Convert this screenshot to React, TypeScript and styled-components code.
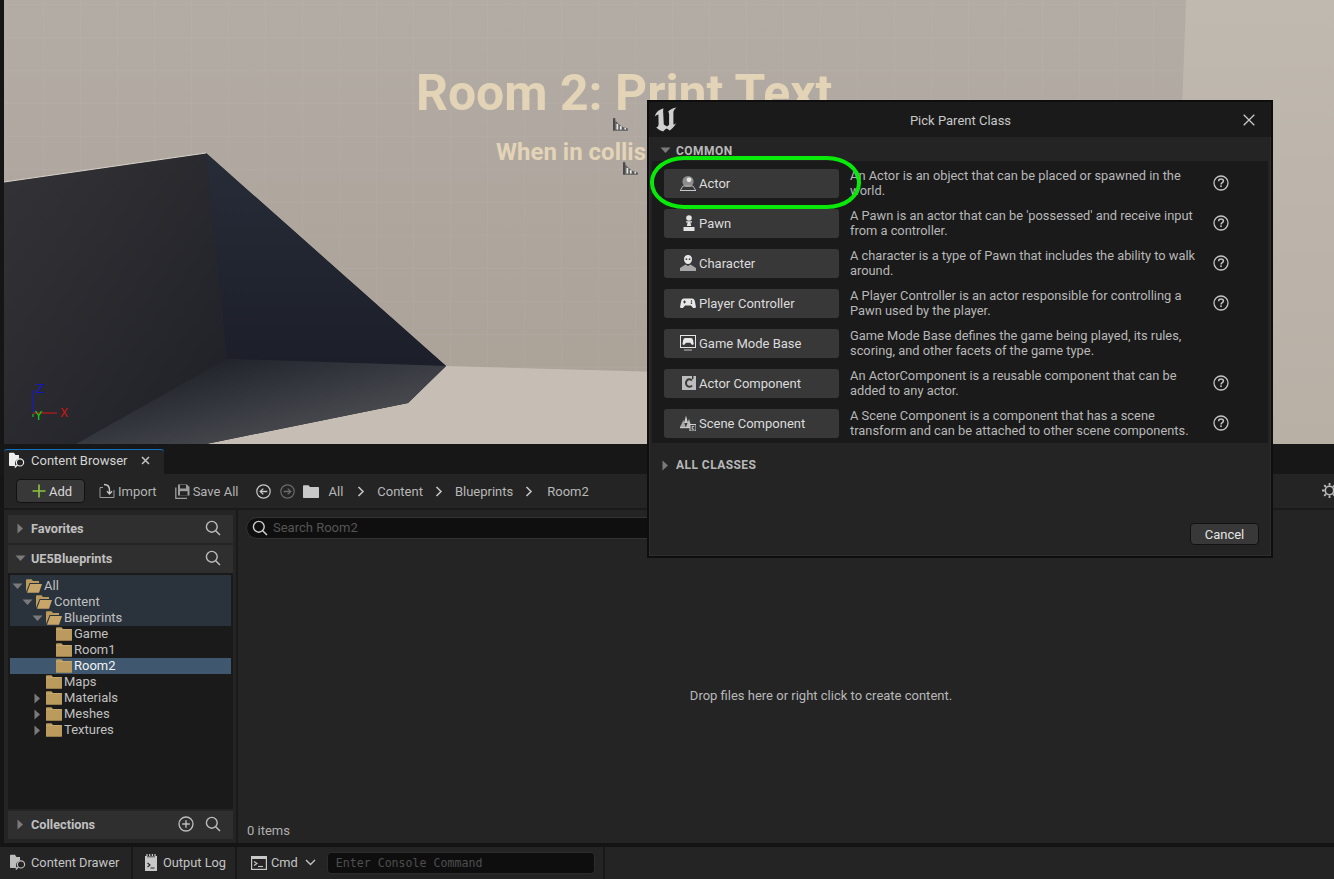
import React from "react";
import styled, { createGlobalStyle } from "styled-components";

const Global = createGlobalStyle`
  html, body { margin: 0; padding: 0; width: 1334px; height: 879px; overflow: hidden; background: #151515; }
  #root { width: 1334px; height: 879px; }
  * { box-sizing: border-box; }
`;

const Page = styled.div`
  position: relative;
  width: 1334px;
  height: 879px;
  display: grid;
  grid-template-rows: 444px 30px 36px 333px 4px 32px;
  font-family: Roboto, "Liberation Sans", sans-serif;
  font-size: 13px;
  color: #c0c0c0;
  background: #151515;
  overflow: hidden;
`;

const Viewport = styled.div`
  position: relative;
  overflow: hidden;
  background: #aaa298;
  svg { display: block; }
`;

const SceneTitle = styled.div`
  position: absolute;
  left: 416px;
  top: 64px;
  font-size: 49.9px;
  line-height: 58px;
  font-weight: 700;
  color: #e3d4b7;
  white-space: nowrap;
`;

const SceneSub = styled.div`
  position: absolute;
  left: 496px;
  top: 137px;
  font-size: 24px;
  line-height: 30px;
  font-weight: 700;
  color: #e3d4b7;
  white-space: nowrap;
`;

const GizmoLabel = styled.span<{ $c: string; $x: number; $y: number }>`
  position: absolute;
  left: ${p => p.$x}px;
  top: ${p => p.$y}px;
  font-family: "DejaVu Sans", sans-serif;
  font-size: 12px;
  line-height: 12px;
  color: ${p => p.$c};
`;

const Sprite = styled.svg<{ $x: number; $y: number }>`
  position: absolute;
  left: ${p => p.$x}px;
  top: ${p => p.$y}px;
`;

const TabBar = styled.div`
  display: flex;
  align-items: flex-end;
  padding-left: 4px;
  background: #171717;
`;

const Tab = styled.div`
  width: 160px;
  height: 25px;
  display: flex;
  align-items: center;
  padding: 0 0 3px 5px;
  gap: 5px;
  background: #242424;
  border-top: 1px solid #0f6fc0;
  border-radius: 3px 3px 0 0;
  color: #d4d4d4;
  white-space: nowrap;
`;

const TabClose = styled.span`
  margin-left: 9px;
  display: flex;
`;

const Toolbar = styled.div`
  display: flex;
  align-items: center;
  height: 36px;
  padding: 0 0 0 12px;
  background: #242424;
  border-bottom: 2px solid #1a1a1a;
  border-left: 4px solid #151515;
  position: relative;
  white-space: nowrap;
`;

const AddButton = styled.div`
  width: 69px;
  height: 24px;
  display: flex;
  align-items: center;
  padding-left: 14px;
  gap: 2px;
  background: #383838;
  border: 1px solid #111;
  border-radius: 4px;
  color: #d8d8d8;
  margin-right: 14px;
`;

const ToolAction = styled.div<{ $mr: number }>`
  display: flex;
  align-items: center;
  gap: 3px;
  color: #b4b4b4;
  margin-right: ${p => p.$mr}px;
`;

const Crumb = styled.span<{ $mr: number }>`
  color: #b8b8b8;
  margin-right: ${p => p.$mr}px;
`;

const ChevronBox = styled.span<{ $mr: number }>`
  display: flex;
  margin-right: ${p => p.$mr}px;
`;

const GearBox = styled.span`
  position: absolute;
  left: 1317px;
  top: 8px;
  display: flex;
`;

const Body = styled.div`
  display: grid;
  grid-template-columns: 229px 5px 1fr;
  background: #242424;
  border-left: 4px solid #151515;
`;

const SidePanel = styled.div`
  display: flex;
  flex-direction: column;
  padding: 5px 0 4px 4px;
  gap: 2px;
  background: #242424;
`;

const PanelHeader = styled.div`
  height: 28px;
  flex: none;
  display: flex;
  align-items: center;
  padding: 0 0 2px 7px;
  background: #2f2f2f;
  color: #c0c0c0;
  font-weight: 700;
  font-size: 12.7px;
`;

const HeaderTitle = styled.span`
  margin-left: 5px;
  flex: 1;
`;

const HeaderIcon = styled.span<{ $mr: number }>`
  display: flex;
  margin-right: ${p => p.$mr}px;
`;

const Tree = styled.div`
  flex: 1;
  margin-top: -2px;
  padding: 2px;
  background: #1a1a1a;
  display: flex;
  flex-direction: column;
`;

const TreeGroup = styled.div`
  background: #2a323c;
  padding-top: 3px;
`;

const TreeRow = styled.div<{ $level: number; $selected?: boolean }>`
  height: 16px;
  display: flex;
  align-items: center;
  padding-left: ${p => 2 + p.$level * 10}px;
  color: ${p => (p.$selected ? "#f0f0f0" : "#c0c0c0")};
  background: ${p => (p.$selected ? "#40586f" : "transparent")};
  line-height: 16px;
`;

const TreeArrow = styled.span`
  width: 14px;
  flex: none;
  display: flex;
  align-items: center;
`;

const TreeLabel = styled.span`
  margin-left: 2px;
`;

const Splitter = styled.div`
  background: #1a1a1a;
  width: 2px;
  margin-left: 3px;
`;

const Main = styled.div`
  display: flex;
  flex-direction: column;
  padding: 7px 0 4px 8px;
`;

const SearchBox = styled.div`
  width: 560px;
  height: 22px;
  display: flex;
  align-items: center;
  gap: 5px;
  padding: 0 0 1px 5px;
  background: #0f0f0f;
  border: 1px solid #333;
  border-radius: 11px;
  color: #555;
`;

const DropHint = styled.div`
  flex: 1;
  display: flex;
  align-items: center;
  justify-content: center;
  color: #b8b8b8;
  padding-top: 28px;
  margin-left: 62px;
`;

const ItemCount = styled.div`
  color: #b0b0b0;
  line-height: 16px;
  margin-left: 1px;
`;

const Gap = styled.div`
  background: #141414;
`;

const StatusBar = styled.div`
  display: flex;
  align-items: stretch;
  background: #242424;
`;

const StatusItem = styled.div<{ $w: number }>`
  width: ${p => p.$w}px;
  flex: none;
  display: flex;
  align-items: center;
  padding-bottom: 1px;
  border-right: 2px solid #181818;
  color: #c4c4c4;
  font-size: 12.8px;
  white-space: nowrap;
`;

const StatusPad = styled.span<{ $w: number; $mr?: number }>`
  display: flex;
  flex: none;
  margin-left: ${p => p.$w}px;
  margin-right: ${p => p.$mr ?? 3}px;
`;

const CmdInput = styled.div`
  width: 268px;
  height: 22px;
  margin-left: 8px;
  display: flex;
  align-items: center;
  padding-left: 8px;
  background: #0e0e0e;
  border: 1px solid #2c2c2c;
  border-radius: 4px;
  color: #4e4e4e;
  font-family: "DejaVu Sans Mono", "Liberation Mono", monospace;
  font-size: 11.6px;
`;

const Dialog = styled.div`
  position: absolute;
  left: 647px;
  top: 100px;
  width: 626px;
  height: 458px;
  display: flex;
  flex-direction: column;
  background: #242424;
  border: 2px solid #0e0e0e;
  box-shadow: inset 0 0 0 1px #2e2e2e;
`;

const DialogTitleBar = styled.div`
  height: 35px;
  flex: none;
  position: relative;
  display: flex;
  align-items: center;
  justify-content: center;
  padding: 2px 0 0 1px;
  background: #1a1a1a;
  color: #c8c8c8;
`;

const LogoBox = styled.span`
  position: absolute;
  left: 5px;
  top: 5px;
  display: flex;
`;

const CloseBox = styled.span`
  position: absolute;
  left: 594px;
  top: 12px;
  display: flex;
`;

const SectionHeader = styled.div<{ $h: number }>`
  height: ${p => p.$h}px;
  flex: none;
  display: flex;
  align-items: center;
  padding: 3px 0 0 11px;
  gap: 5px;
  color: #b8b8b8;
  font-weight: 700;
  font-size: 12px;
  letter-spacing: 0.45px;
`;

const ClassList = styled.div`
  margin: 0 3px;
  padding-top: 2px;
  background: #1a1a1a;
  flex: none;
`;

const ClassRow = styled.div`
  height: 40px;
  display: flex;
  align-items: center;
  padding-left: 12px;
`;

const ClassButton = styled.div`
  width: 175px;
  height: 29px;
  flex: none;
  display: flex;
  align-items: center;
  background: #383838;
  border-radius: 3px;
  color: #dcdcdc;
`;

const ClassIcon = styled.span`
  width: 35px;
  flex: none;
  display: flex;
  justify-content: flex-end;
  padding-right: 3px;
`;

const ClassDesc = styled.div`
  width: 363px;
  margin-left: 11px;
  line-height: 15px;
  font-size: 12.85px;
  color: #b8b8b8;
`;

const HelpBox = styled.span`
  display: flex;
`;

const DialogFooter = styled.div`
  margin-top: auto;
  display: flex;
  justify-content: flex-end;
  padding: 0 12px 11px 0;
`;

const CancelButton = styled.div`
  width: 69px;
  height: 22px;
  display: flex;
  align-items: center;
  justify-content: center;
  background: #383838;
  border: 1px solid #111;
  border-radius: 4px;
  color: #e4e4e4;
`;

const Ring = styled.div`
  position: absolute;
  left: 650px;
  top: 156px;
  width: 211px;
  height: 53px;
  border: 4px solid #0aea0a;
  border-radius: 34px / 26px;
  pointer-events: none;
`;

/* ---------- icons ---------- */

const Tri = ({ open, c = "#7a7a7a" }: { open?: boolean; c?: string }) => (
  <svg width="11" height="11" viewBox="0 0 11 11">
    {open ? <path d="M0.5 2.5H10.5L5.5 8Z" fill={c} /> : <path d="M2.5 0.5V10.5L8 5.5Z" fill={c} />}
  </svg>
);

const FolderClosed = () => (
  <svg width="16" height="14" viewBox="0 0 16 14">
    <path d="M0 1.2C0 .6.4.3 1 .3H5.5L7 2H15.5C15.8 2 16 2.2 16 2.6V13.2C16 13.6 15.8 13.8 15.4 13.8H.6C.2 13.8 0 13.6 0 13.2Z" fill="#bb9a5e" />
    <path d="M0 2.6H16" stroke="#e2cfa6" strokeWidth=".6" opacity=".5" />
  </svg>
);

const FolderOpen = () => (
  <svg width="16" height="14" viewBox="0 0 16 14">
    <path d="M0 13V1.2C0 .6.4.3 1 .3H5.5L7 2H13V4H3.6L0 13Z" fill="#bb9a5e" />
    <path d="M1 13.8L4.2 5H16L13 13.8Z" fill="#c8a568" />
  </svg>
);

const Search = ({ s = 16, c = "#bdbdbd" }: { s?: number; c?: string }) => (
  <svg width={s} height={s} viewBox="0 0 16 16" fill="none">
    <circle cx="6.8" cy="6.8" r="5.4" stroke={c} strokeWidth="1.4" />
    <path d="M10.7 10.7L15 15" stroke={c} strokeWidth="1.5" />
  </svg>
);

const BrowserIcon = ({ c = "#eee" }: { c?: string }) => (
  <svg width="17" height="17" viewBox="0 0 17 17">
    <path d="M0 1.5C0 1 .3.7.8.7H5L6.4 3H10V6.5C7.6 7 6 9 6 11.3C6 12.5 6.3 13.4 6.8 14H.8C.3 14 0 13.7 0 13.2Z" fill={c} />
    <circle cx="11" cy="10.4" r="3.6" fill="none" stroke={c} strokeWidth="1.2" />
    <path d="M8.3 13L5.8 15.6" stroke={c} strokeWidth="1.5" />
  </svg>
);

const Plus = () => (
  <svg width="16" height="16" viewBox="0 0 16 16">
    <path d="M8 1.5V14.5M1.5 8H14.5" stroke="#8cc63f" strokeWidth="1.6" />
  </svg>
);

const ImportIcon = () => (
  <svg width="16" height="16" viewBox="0 0 16 16" fill="none">
    <path d="M4 4.5H1V14.5H15V7" stroke="#9a9a9a" strokeWidth="1" />
    <path d="M5 1.5C8 1.5 10.5 3 10.5 7V10.5M8 8.2L10.5 11L13 8.2" stroke="#c8c8c8" strokeWidth="1.4" />
  </svg>
);

const SaveIcon = () => (
  <svg width="15" height="15" viewBox="0 0 15 15">
    <path d="M3 .5H12L14.5 3V11.5H3Z" fill="#9c9c9c" />
    <rect x="5" y="1" width="6" height="3.5" fill="#242424" />
    <rect x="5" y="7.2" width="7.5" height="4.3" fill="#242424" />
    <path d="M.8 3.5V14.3H12" stroke="#9c9c9c" strokeWidth="1.3" fill="none" />
  </svg>
);

const NavCircle = ({ dir, c }: { dir: "l" | "r"; c: string }) => (
  <svg width="15" height="15" viewBox="0 0 15 15" fill="none">
    <circle cx="7.5" cy="7.5" r="6.7" stroke={c} strokeWidth="1.2" />
    <path d={dir === "l" ? "M11.3 7.5H4.5M7.3 4.6L4.2 7.5L7.3 10.4" : "M3.7 7.5H10.5M7.7 4.6L10.8 7.5L7.7 10.4"} stroke={c} strokeWidth="1.3" />
  </svg>
);

const WhiteFolder = () => (
  <svg width="16" height="13" viewBox="0 0 16 13">
    <path d="M0 1.2C0 .6.3.3.9.3H5.6L7 2H15.3C15.7 2 16 2.3 16 2.7V12.2C16 12.7 15.7 13 15.3 13H.7C.3 13 0 12.7 0 12.2Z" fill="#c8c8c8" />
  </svg>
);

const Chevron = () => (
  <svg width="8" height="11" viewBox="0 0 8 11" fill="none">
    <path d="M1.5 1L6 5.5L1.5 10" stroke="#c4c4c4" strokeWidth="1.6" />
  </svg>
);

const Gear = () => (
  <svg width="17" height="17" viewBox="0 0 17 17" fill="none">
    <circle cx="8.5" cy="8.5" r="4.2" stroke="#bbb" strokeWidth="1.6" />
    <path d="M8.5 1V3.6M8.5 13.4V16M1 8.5H3.6M13.4 8.5H16M3.2 3.2L5 5M12 12L13.8 13.8M13.8 3.2L12 5M5 12L3.2 13.8" stroke="#bbb" strokeWidth="1.8" />
  </svg>
);

const SmallX = () => (
  <svg width="9" height="9" viewBox="0 0 9 9">
    <path d="M1 1L8 8M8 1L1 8" stroke="#c4c4c4" strokeWidth="1.5" />
  </svg>
);

const PlusCircle = () => (
  <svg width="16" height="16" viewBox="0 0 16 16" fill="none">
    <circle cx="8" cy="8" r="7" stroke="#bdbdbd" strokeWidth="1.3" />
    <path d="M8 4.2V11.8M4.2 8H11.8" stroke="#bdbdbd" strokeWidth="1.4" />
  </svg>
);

const OutputLogIcon = () => (
  <svg width="12" height="17" viewBox="0 0 12 17">
    <rect x="0" y="2" width="12" height="15" fill="#c8c8c8" />
    <path d="M2 0V3M4.7 0V3M7.4 0V3M10 0V3" stroke="#c8c8c8" strokeWidth="1.2" />
    <path d="M2 2.8H10" stroke="#242424" strokeWidth=".8" />
    <path d="M2.5 9L5 11L2.5 13" stroke="#242424" strokeWidth="1.1" fill="none" />
    <path d="M5.5 14H9.5" stroke="#242424" strokeWidth="1" />
  </svg>
);

const CmdIcon = () => (
  <svg width="16" height="14" viewBox="0 0 16 14" fill="none">
    <rect x=".6" y=".6" width="14.8" height="12.8" stroke="#c8c8c8" strokeWidth="1.2" />
    <rect x="1" y="1" width="14" height="2" fill="#c8c8c8" />
    <path d="M3 5.5L6 7.5L3 9.5" stroke="#c8c8c8" strokeWidth="1.1" />
    <path d="M7 10.5H12" stroke="#c8c8c8" strokeWidth="1.1" />
  </svg>
);

const CaretDown = () => (
  <svg width="11" height="7" viewBox="0 0 11 7" fill="none">
    <path d="M1 1L5.5 5.5L10 1" stroke="#c4c4c4" strokeWidth="1.4" />
  </svg>
);

const Help = () => (
  <svg width="16" height="16" viewBox="0 0 16 16" fill="none">
    <circle cx="8" cy="8" r="7" stroke="#c4c4c4" strokeWidth="1.3" />
    <path d="M5.6 6.2C5.6 4.8 6.7 4 8 4C9.4 4 10.4 4.8 10.4 6C10.4 7.6 8 7.6 8 9.4" stroke="#c4c4c4" strokeWidth="1.5" />
    <rect x="7.2" y="10.4" width="1.6" height="1.6" fill="#c4c4c4" />
  </svg>
);

const BigX = () => (
  <svg width="12" height="12" viewBox="0 0 12 12">
    <path d="M.7.7L11.3 11.3M11.3.7L.7 11.3" stroke="#c8c8c8" strokeWidth="1.3" />
  </svg>
);

const UELogo = () => (
  <svg width="24" height="25" viewBox="0 0 24 25">
    <path
      d="M9.5 1.5C5.5 2.2 1.8 5 .8 9.5C2 8.2 3 7.6 4.4 7.4L4.6 17C4.6 19 3.8 20 2.2 20.6C4.2 22.4 6.5 23.8 9.2 24.6C10.3 23.2 11.3 22.4 12.8 21.6L15.8 23.6C18.4 21.6 20.6 19.2 22.2 16.3C21 17.2 20.2 17.6 19.4 17.6V5.6C19.4 3.8 20.4 2.4 22.6.6C19.4 1 16.4 2.4 14.2 4.4C14.8 5.4 15.1 6.2 15.1 7.2V17.8L13 19.4L9.8 17.6L9.2 5.8C9.1 4 9.2 2.8 9.5 1.5Z"
      fill="#d0d0d0"
    />
  </svg>
);

const ActorIcon = () => (
  <svg width="16" height="16" viewBox="0 0 16 16">
    <circle cx="8" cy="6.5" r="5.6" fill="#8d8d8d" />
    <circle cx="9" cy="4.8" r="2.4" fill="#e6e6e6" />
    <path d="M3 11H13L15.8 15.5H.2Z" fill="none" stroke="#b5b5b5" strokeWidth="1" />
    <path d="M0 15H16V16H0Z" fill="#c8c8c8" />
  </svg>
);

const PawnIcon = () => (
  <svg width="14" height="16" viewBox="0 0 14 16">
    <circle cx="7" cy="3" r="2.8" fill="#e4e4e4" />
    <path d="M4 6.3H10V7.5H8.4L9.2 11H4.8L5.6 7.5H4Z" fill="#e4e4e4" />
    <rect x="1.5" y="12" width="11" height="4" fill="#e4e4e4" />
  </svg>
);

const CharacterIcon = () => (
  <svg width="16" height="16" viewBox="0 0 16 16">
    <path d="M8 0C5.4 0 4 1.8 4 4.2C4 6.8 5.6 9 8 9C10.4 9 12 6.8 12 4.2C12 1.8 10.6 0 8 0Z" fill="#e6e6e6" />
    <circle cx="6.4" cy="4.2" r=".9" fill="#444" />
    <circle cx="9.6" cy="4.2" r=".9" fill="#444" />
    <path d="M5.5 9.5L0 13V16H16V13L10.5 9.5L8 11Z" fill="#a8a8a8" />
  </svg>
);

const GamepadIcon = ({ w = 16 }: { w?: number }) => (
  <svg width={w} height={w * 0.68} viewBox="0 0 16 11">
    <path d="M4 .5H12C13.6.5 14.6 1.6 15 3.5L16 8.8C16 10.4 14 11 13 9.8L11 7.5H5L3 9.8C2 11 0 10.4 0 8.8L1 3.5C1.4 1.6 2.4.5 4 .5Z" fill="#e8e8e8" />
    <path d="M4.5 2.5V5.5M3 4H6" stroke="#383838" strokeWidth="1" />
    <circle cx="11.5" cy="3" r=".8" fill="#383838" />
    <circle cx="11.5" cy="5.2" r=".8" fill="#383838" />
  </svg>
);

const GameModeIcon = () => (
  <svg width="16" height="17" viewBox="0 0 16 17" fill="none">
    <rect x=".5" y=".5" width="15" height="12" stroke="#e4e4e4" strokeWidth="1" />
    <g transform="translate(2.5 2.6) scale(.7)">
      <path d="M4 .5H12C13.6.5 14.6 1.6 15 3.5L16 8.8C16 10.4 14 11 13 9.8L11 7.5H5L3 9.8C2 11 0 10.4 0 8.8L1 3.5C1.4 1.6 2.4.5 4 .5Z" fill="#e8e8e8" />
    </g>
    <path d="M4 15H12" stroke="#9a9a9a" strokeWidth="1.4" />
  </svg>
);

const ActorCompIcon = () => (
  <svg width="14" height="14" viewBox="0 0 14 14">
    <rect width="14" height="14" fill="#bdbdbd" />
    <path d="M10 4.5C9.4 3.6 8.4 3.2 7.4 3.2C5.4 3.2 4 4.9 4 7C4 9.1 5.4 10.8 7.4 10.8C8.4 10.8 9.4 10.4 10 9.5" stroke="#383838" strokeWidth="2" fill="none" />
    <rect x="10" y="0" width="1.4" height="3" fill="#383838" />
  </svg>
);

const SceneCompIcon = () => (
  <svg width="16" height="16" viewBox="0 0 16 16">
    <path d="M6 .5L8 8H4Z" fill="#c8c8c8" />
    <path d="M3.5 5L5.6 12H0Z" fill="#a8a8a8" />
    <path d="M9 4L11.5 12H6Z" fill="#bcbcbc" />
    <rect x="0" y="12" width="10" height="1.2" fill="#c8c8c8" />
    <rect x="10" y="9.5" width="6" height="6.5" fill="#383838" stroke="#d0d0d0" strokeWidth="1" />
    <path d="M14.2 11.4H12.2V14.2H14.2" stroke="#d0d0d0" fill="none" />
  </svg>
);

const StairSprite = () => (
  <>
    <rect x="0" y="0" width="2" height="11" fill="#4a4a4a" />
    <path d="M2 2L6 6L9 8L13 9V11H2Z" fill="#5c5c5c" />
    <rect x="3" y="5" width="1.6" height="5" fill="#e8e8e8" />
    <rect x="6" y="7" width="1.6" height="3" fill="#e8e8e8" />
    <rect x="10" y="8.5" width="1.4" height="1.5" fill="#e8e8e8" />
  </>
);

const Scene = () => (
  <svg width="1334" height="444" viewBox="0 0 1334 444">
    <defs>
      <linearGradient id="wall" x1="0" y1="0" x2="0" y2="1">
        <stop offset="0" stopColor="#b3aca5" />
        <stop offset="1" stopColor="#aaa196" />
      </linearGradient>
      <linearGradient id="rwall" x1="0" y1="0" x2="0" y2="1">
        <stop offset="0" stopColor="#c0b9b0" />
        <stop offset="1" stopColor="#b8afa5" />
      </linearGradient>
      <linearGradient id="lface" x1="0" y1="0" x2="1" y2="0.9">
        <stop offset="0" stopColor="#333337" />
        <stop offset="1" stopColor="#202127" />
      </linearGradient>
      <linearGradient id="rface" x1="0" y1="0" x2="0" y2="1">
        <stop offset="0" stopColor="#272c38" />
        <stop offset="1" stopColor="#1c1f29" />
      </linearGradient>
      <linearGradient id="shade" x1="0.15" y1="0.2" x2="0.85" y2="0.85">
        <stop offset="0" stopColor="#20222a" />
        <stop offset="0.5" stopColor="#383a42" />
        <stop offset="1" stopColor="#525254" />
      </linearGradient>
      <pattern id="tiles" x="6" y="4" width="37" height="33" patternUnits="userSpaceOnUse">
        <path d="M0 0V33M0 0H37" stroke="#fff" strokeOpacity=".07" strokeWidth="1" fill="none" />
      </pattern>
    </defs>
    <rect width="1334" height="444" fill="url(#wall)" />
    <rect width="1190" height="372" fill="url(#tiles)" />
    <path d="M446 366L1170 386V444H200L408 403Z" fill="#c6bdb5" />
    <path d="M1186 0H1334V444H1170Z" fill="url(#rwall)" />
    <path d="M4 182L206 153L446 366L408 403L206 444H4Z" fill="#24252c" />
    <path d="M4 182L206 153L227 359L76 444H4Z" fill="url(#lface)" />
    <path d="M4 182L206 153" stroke="#ddd6ce" strokeWidth="1" />
    <path d="M206 153L446 366L227 359Z" fill="url(#rface)" />
    <path d="M227 359L446 366L408 403L206 444H76Z" fill="url(#shade)" />
    <rect width="4" height="444" fill="#151515" />
    <path d="M33 390V413" stroke="#1414e0" strokeWidth="1" />
    <path d="M33 413H57" stroke="#e01414" strokeWidth="1" />
    <path d="M33 414V417" stroke="#14e014" strokeWidth="1" />
  </svg>
);

const rows: { name: string; icon: React.ReactNode; lines: [string, string]; help: boolean }[] = [
  { name: "Actor", icon: <ActorIcon />, lines: ["An Actor is an object that can be placed or spawned in the", "world."], help: true },
  { name: "Pawn", icon: <PawnIcon />, lines: ["A Pawn is an actor that can be 'possessed' and receive input", "from a controller."], help: true },
  { name: "Character", icon: <CharacterIcon />, lines: ["A character is a type of Pawn that includes the ability to walk", "around."], help: true },
  { name: "Player Controller", icon: <GamepadIcon />, lines: ["A Player Controller is an actor responsible for controlling a", "Pawn used by the player."], help: true },
  { name: "Game Mode Base", icon: <GameModeIcon />, lines: ["Game Mode Base defines the game being played, its rules,", "scoring, and other facets of the game type."], help: false },
  { name: "Actor Component", icon: <ActorCompIcon />, lines: ["An ActorComponent is a reusable component that can be", "added to any actor."], help: true },
  { name: "Scene Component", icon: <SceneCompIcon />, lines: ["A Scene Component is a component that has a scene", "transform and can be attached to other scene components."], help: true },
];

const lowerTree: { name: string; arrow: boolean }[] = [
  { name: "Maps", arrow: false },
  { name: "Materials", arrow: true },
  { name: "Meshes", arrow: true },
  { name: "Textures", arrow: true },
];

export default function App() {
  return (
    <Page>
      <Global />
      <Viewport>
        <Scene />
        <SceneTitle>Room 2: Print Text</SceneTitle>
        <SceneSub>When in collision print text</SceneSub>
        <Sprite $x={613} $y={118} width="16" height="14" viewBox="0 0 14 12"><StairSprite /></Sprite>
        <Sprite $x={623} $y={162} width="16" height="14" viewBox="0 0 14 12"><StairSprite /></Sprite>
        <GizmoLabel $c="#1414d0" $x={36} $y={383}>Z</GizmoLabel>
        <GizmoLabel $c="#14d014" $x={35} $y={410}>Y</GizmoLabel>
        <GizmoLabel $c="#d01414" $x={60} $y={407}>X</GizmoLabel>
      </Viewport>

      <TabBar>
        <Tab>
          <BrowserIcon />
          <span>Content Browser</span>
          <TabClose><SmallX /></TabClose>
        </Tab>
      </TabBar>

      <Toolbar>
        <AddButton><Plus /><span>Add</span></AddButton>
        <ToolAction $mr={18}><ImportIcon /><span>Import</span></ToolAction>
        <ToolAction $mr={18}><SaveIcon /><span>Save All</span></ToolAction>
        <ChevronBox $mr={9}><NavCircle dir="l" c="#c8c8c8" /></ChevronBox>
        <ChevronBox $mr={8}><NavCircle dir="r" c="#6a6a6a" /></ChevronBox>
        <ChevronBox $mr={9}><WhiteFolder /></ChevronBox>
        <Crumb $mr={14}>All</Crumb>
        <ChevronBox $mr={12}><Chevron /></ChevronBox>
        <Crumb $mr={12}>Content</Crumb>
        <ChevronBox $mr={12}><Chevron /></ChevronBox>
        <Crumb $mr={12}>Blueprints</Crumb>
        <ChevronBox $mr={14}><Chevron /></ChevronBox>
        <Crumb $mr={0}>Room2</Crumb>
        <GearBox><Gear /></GearBox>
      </Toolbar>

      <Body>
        <SidePanel>
          <PanelHeader>
            <Tri />
            <HeaderTitle>Favorites</HeaderTitle>
            <HeaderIcon $mr={12}><Search /></HeaderIcon>
          </PanelHeader>
          <PanelHeader>
            <Tri open />
            <HeaderTitle>UE5Blueprints</HeaderTitle>
            <HeaderIcon $mr={12}><Search /></HeaderIcon>
          </PanelHeader>
          <Tree>
            <TreeGroup>
              <TreeRow $level={0}><TreeArrow><Tri open /></TreeArrow><FolderOpen /><TreeLabel>All</TreeLabel></TreeRow>
              <TreeRow $level={1}><TreeArrow><Tri open /></TreeArrow><FolderOpen /><TreeLabel>Content</TreeLabel></TreeRow>
              <TreeRow $level={2}><TreeArrow><Tri open /></TreeArrow><FolderOpen /><TreeLabel>Blueprints</TreeLabel></TreeRow>
            </TreeGroup>
            <TreeRow $level={3}><TreeArrow /><FolderClosed /><TreeLabel>Game</TreeLabel></TreeRow>
            <TreeRow $level={3}><TreeArrow /><FolderClosed /><TreeLabel>Room1</TreeLabel></TreeRow>
            <TreeRow $level={3} $selected><TreeArrow /><FolderClosed /><TreeLabel>Room2</TreeLabel></TreeRow>
            {lowerTree.map(t => (
              <TreeRow $level={2} key={t.name}>
                <TreeArrow>{t.arrow && <Tri />}</TreeArrow>
                <FolderClosed />
                <TreeLabel>{t.name}</TreeLabel>
              </TreeRow>
            ))}
          </Tree>
          <PanelHeader>
            <Tri />
            <HeaderTitle>Collections</HeaderTitle>
            <HeaderIcon $mr={11}><PlusCircle /></HeaderIcon>
            <HeaderIcon $mr={12}><Search /></HeaderIcon>
          </PanelHeader>
        </SidePanel>
        <Splitter />
        <Main>
          <SearchBox>
            <Search c="#cfcfcf" />
            <span>Search Room2</span>
          </SearchBox>
          <DropHint>Drop files here or right click to create content.</DropHint>
          <ItemCount>0 items</ItemCount>
        </Main>
      </Body>

      <Gap />

      <StatusBar>
        <StatusItem $w={133}>
          <StatusPad $w={10} $mr={4}><BrowserIcon c="#bdbdbd" /></StatusPad>
          <span>Content Drawer</span>
        </StatusItem>
        <StatusItem $w={104}>
          <StatusPad $w={12} $mr={6}><OutputLogIcon /></StatusPad>
          <span>Output Log</span>
        </StatusItem>
        <StatusItem $w={368}>
          <StatusPad $w={14} $mr={4}><CmdIcon /></StatusPad>
          <span>Cmd</span>
          <StatusPad $w={7} $mr={3}><CaretDown /></StatusPad>
          <CmdInput>Enter Console Command</CmdInput>
        </StatusItem>
      </StatusBar>

      <Dialog>
        <DialogTitleBar>
          <LogoBox><UELogo /></LogoBox>
          Pick Parent Class
          <CloseBox><BigX /></CloseBox>
        </DialogTitleBar>
        <SectionHeader $h={24}>
          <Tri open />
          <span>COMMON</span>
        </SectionHeader>
        <ClassList>
          {rows.map(r => (
            <ClassRow key={r.name}>
              <ClassButton>
                <ClassIcon>{r.icon}</ClassIcon>
                <span>{r.name}</span>
              </ClassButton>
              <ClassDesc>{r.lines[0]}<br />{r.lines[1]}</ClassDesc>
              {r.help && <HelpBox><Help /></HelpBox>}
            </ClassRow>
          ))}
        </ClassList>
        <SectionHeader $h={41}>
          <Tri />
          <span>ALL CLASSES</span>
        </SectionHeader>
        <DialogFooter><CancelButton>Cancel</CancelButton></DialogFooter>
      </Dialog>
      <Ring />
    </Page>
  );
}
